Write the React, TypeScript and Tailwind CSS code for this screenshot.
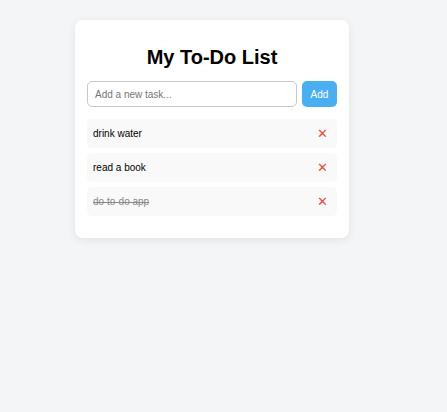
import React, { useState } from "react";

type Task = { id: number; text: string; done: boolean };

export default function App() {
    const [tasks, setTasks] = useState<Task[]>([
        { id: 1, text: "drink water", done: false },
        { id: 2, text: "read a book", done: false },
        { id: 3, text: "do to-do app", done: true },
    ]);
    const [value, setValue] = useState("");

    const add = () => {
        if (!value.trim()) return;
        setTasks([...tasks, { id: Date.now(), text: value.trim(), done: false }]);
        setValue("");
    };

    return (
        <div className="min-h-[412px] w-full bg-[#f4f5f7] pt-[20px] font-['Liberation_Sans',Arial,sans-serif]">
            <div className="ml-[75px] w-[274px] rounded-[8px] bg-white px-[12px] pt-[24px] pb-[22px] shadow-[0_2px_10px_rgba(0,0,0,0.08)]">
                <h1 className="mb-[11px] text-center text-[20px] font-bold leading-[26px] text-black">My To-Do List</h1>
                <div className="flex gap-[5px]">
                    <input
                        value={value}
                        onChange={(e) => setValue(e.target.value)}
                        placeholder="Add a new task..."
                        className="h-[26px] flex-1 rounded-[5px] border border-[#c8c8c8] px-[7px] text-[10px] text-black outline-none placeholder:text-[#757575]"
                    />
                    <button onClick={add} className="h-[26px] w-[35px] rounded-[5px] bg-[#4aaff0] text-[10px] text-white">
                        Add
                    </button>
                </div>
                <ul className="mt-[12px] flex flex-col gap-[5px]">
                    {tasks.map((t) => (
                        <li key={t.id} className="flex h-[29px] items-center justify-between rounded-[5px] bg-[#f9f9f9] pl-[6px] pr-[9px]">
                            <span
                                onClick={() => setTasks(tasks.map((x) => (x.id === t.id ? { ...x, done: !x.done } : x)))}
                                className={t.done ? "text-[10px] text-[#888] line-through" : "text-[10px] text-black"}
                            >
                                {t.text}
                            </span>
                            <button
                                onClick={() => setTasks(tasks.filter((x) => x.id !== t.id))}
                                className="text-[13px] leading-none text-[#e74c3c]"
                            >
                                ✕
                            </button>
                        </li>
                    ))}
                </ul>
            </div>
        </div>
    );
}
